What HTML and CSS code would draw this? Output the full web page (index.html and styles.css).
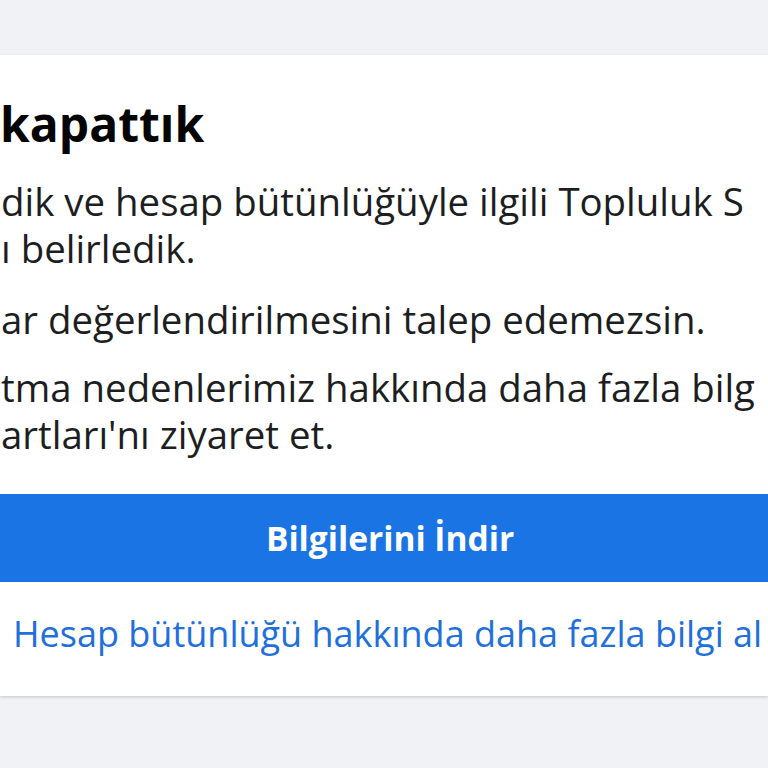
FILE: index.html
```html
<!DOCTYPE html>
<html lang="tr">
<head>
<meta charset="utf-8">
<title>Hesabını kapattık</title>
<link rel="stylesheet" href="styles.css">
</head>
<body>
<main class="page">
  <section class="card">
    <h1 class="title">kapattık</h1>
    <p class="text">dik ve hesap bütünlüğüyle ilgili Topluluk S<br>ı belirledik.</p>
    <p class="text gap-sm">ar değerlendirilmesini talep edemezsin.</p>
    <p class="text gap-xs">tma nedenlerimiz hakkında daha fazla bilg<br>artları'nı ziyaret et.</p>
    <button class="primary" type="button">Bilgilerini İndir</button>
    <a class="link" href="#">Hesap bütünlüğü hakkında daha fazla bilgi al</a>
  </section>
</main>
</body>
</html>
```

FILE: styles.css
```css
html, body {
  margin: 0;
  padding: 0;
  background: #f0f2f5;
  height: 100%;
  overflow: hidden;
}

.page {
  padding-top: 55px;
}

.card {
  background: #ffffff;
  box-shadow: 0 1px 3px rgba(0, 0, 0, 0.18);
  padding: 41px 0 39px 0;
  display: flex;
  flex-direction: column;
  overflow: hidden;
  white-space: nowrap;
  font-family: "Open Sans", "Noto Sans", sans-serif;
  color: #1c1e21;
}

.title {
  margin: 0;
  padding-left: 0;
  font-size: 48px;
  line-height: 56px;
  font-weight: 700;
  color: #050505;
}

.text {
  margin: 26px 0 0 0;
  padding-left: 1px;
  font-size: 38.4px;
  line-height: 47px;
}

.gap-sm { margin-top: 24px; }
.gap-xs { margin-top: 21px; }

.primary {
  margin-top: 36px;
  height: 88px;
  border: 0;
  border-radius: 0;
  background: #1b74e4;
  color: #ffffff;
  font-family: "Open Sans", "Noto Sans", sans-serif;
  font-weight: 700;
  font-size: 33.5px;
  padding: 0;
  padding-left: 12px;
}

.link {
  margin-top: 28px;
  padding-left: 13px;
  font-size: 36px;
  line-height: 47px;
  color: #216fdb;
  text-decoration: none;
}
```
